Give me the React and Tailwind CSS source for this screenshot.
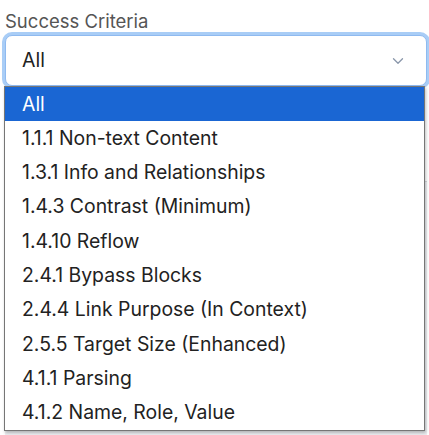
import { ChevronDown } from "lucide-react";

const options = [
  "All",
  "1.1.1 Non-text Content",
  "1.3.1 Info and Relationships",
  "1.4.3 Contrast (Minimum)",
  "1.4.10 Reflow",
  "2.4.1 Bypass Blocks",
  "2.4.4 Link Purpose (In Context)",
  "2.5.5 Target Size (Enhanced)",
  "4.1.1 Parsing",
  "4.1.2 Name, Role, Value",
];

export default function App() {
  return (
    <div
      className="w-[429px] h-[435px] bg-white overflow-hidden relative"
      style={{ fontFamily: "Inter, 'Noto Sans', sans-serif" }}
    >
      {/* Filter field */}
      <div className="pl-[5px] pr-[2px] pt-[9px]">
        <label className="block text-[18.5px] leading-[24px] text-[#555] mb-[2px]">Success Criteria</label>
        <div className="relative">
          <div className="h-[51px] rounded-[7px] border border-[#8fbaf0] ring-[3px] ring-[#a9cdf6] bg-white flex items-center justify-between pl-[16px] pr-[19px] shadow-[0_2px_4px_rgba(0,0,0,0.08)]">
            <span className="text-[19.5px] text-[#222]">All</span>
            <ChevronDown size={18} strokeWidth={1.75} className="text-[#8a97aa]" />
          </div>

          {/* Open list */}
          <ul className="absolute left-[-1px] top-[51px] w-[421px] bg-white border border-[#767676] shadow-[1px_2px_3px_rgba(0,0,0,0.25)] z-10">
            {options.map((o, i) => (
              <li
                key={o}
                className={
                  i === 0
                    ? "h-[34.3px] flex items-center pl-[17px] bg-[#1a66d3] text-white text-[19.4px]"
                    : "h-[34.3px] flex items-center pl-[17px] text-[#222] text-[19.4px]"
                }
              >
                {o}
              </li>
            ))}
          </ul>
        </div>

        {/* Content behind the list */}
        <div className="mt-[95px] h-[260px] bg-[#eef0f3] border-t border-[#d5d8dc]" />
      </div>
    </div>
  );
}
